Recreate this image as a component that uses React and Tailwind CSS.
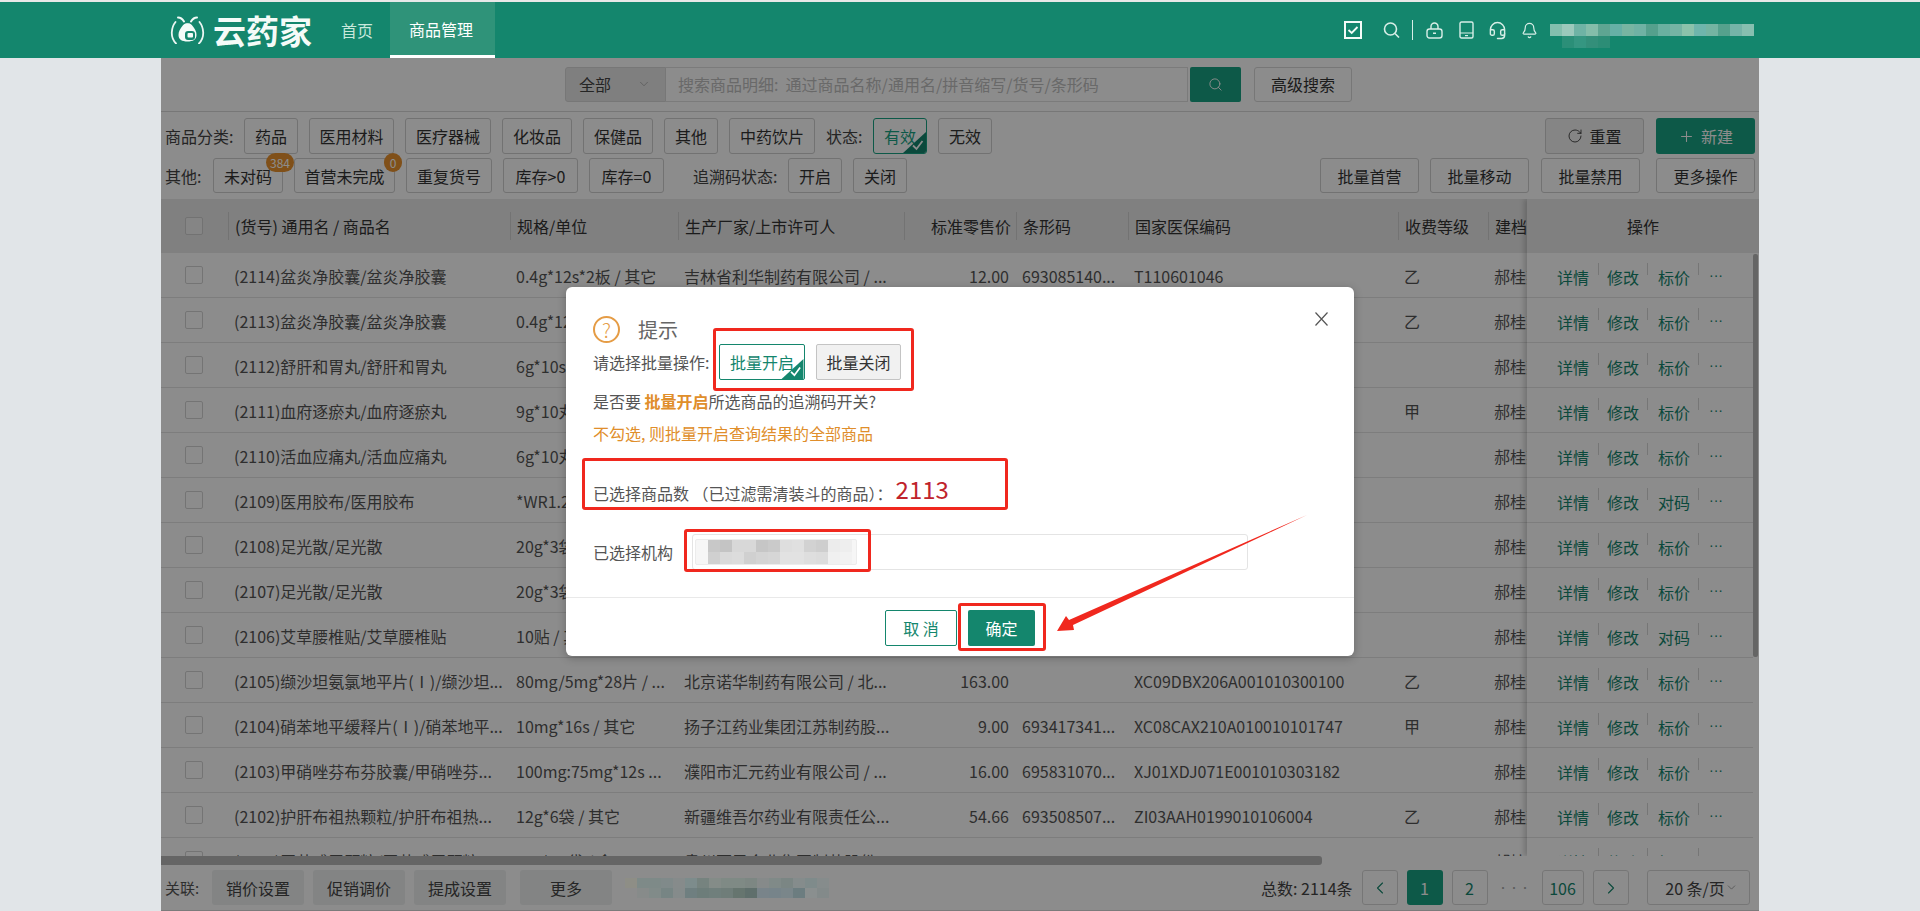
import React from "react";
import { Headset, Bell, ChevronLeft, ChevronRight, ChevronDown, RotateCw, Plus, Search } from "lucide-react";

const COLS = [
  { w: "w-[282px]", pl: "pl-[6px]" },
  { w: "w-[168px]", pl: "pl-[6px]" },
  { w: "w-[226px]", pl: "pl-[6px]" },
  { w: "w-[112px]", pl: "pl-[6px]" },
  { w: "w-[112px]", pl: "pl-[6px]" },
  { w: "w-[270px]", pl: "pl-[6px]" },
  { w: "w-[90px]", pl: "pl-[6px]" },
  { w: "w-[60px]", pl: "pl-[6px]" },
];

const ROWS = [
  ["(2114)盆炎净胶囊/盆炎净胶囊", "0.4g*12s*2板 / 其它", "吉林省利华制药有限公司 / ...", "12.00", "693085140...", "T110601046", "乙", "标价"],
  ["(2113)盆炎净胶囊/盆炎净胶囊", "0.4g*12s*2板 / 其它", "吉林省利华制药有限公司 / ...", "12.00", "693085140...", "T110601046", "乙", "标价"],
  ["(2112)舒肝和胃丸/舒肝和胃丸", "6g*10s / 其它", "", "", "", "", "", "标价"],
  ["(2111)血府逐瘀丸/血府逐瘀丸", "9g*10丸 / 其它", "", "", "", "", "甲", "标价"],
  ["(2110)活血应痛丸/活血应痛丸", "6g*10丸 / 其它", "", "", "", "", "", "标价"],
  ["(2109)医用胶布/医用胶布", "*WR1.2", "", "", "", "", "", "对码"],
  ["(2108)足光散/足光散", "20g*3袋 / 其它", "", "", "", "", "", "标价"],
  ["(2107)足光散/足光散", "20g*3袋 / 其它", "", "", "", "", "", "标价"],
  ["(2106)艾草腰椎贴/艾草腰椎贴", "10贴 / 其它", "", "", "", "", "", "对码"],
  ["(2105)缬沙坦氨氯地平片(Ⅰ)/缬沙坦...", "80mg/5mg*28片 / ...", "北京诺华制药有限公司 / 北...", "163.00", "", "XC09DBX206A001010300100", "乙", "标价"],
  ["(2104)硝苯地平缓释片(Ⅰ)/硝苯地平...", "10mg*16s / 其它", "扬子江药业集团江苏制药股...", "9.00", "693417341...", "XC08CAX210A010010101747", "甲", "标价"],
  ["(2103)甲硝唑芬布芬胶囊/甲硝唑芬...", "100mg:75mg*12s ...", "濮阳市汇元药业有限公司 / ...", "16.00", "695831070...", "XJ01XDJ071E001010303182", "", "标价"],
  ["(2102)护肝布祖热颗粒/护肝布祖热...", "12g*6袋 / 其它", "新疆维吾尔药业有限责任公...", "54.66", "693508507...", "ZI03AAH0199010106004", "乙", "标价"],
  ["(2101)玉苓感冒颗粒/玉苓感冒颗粒", "10g*10袋 / 盒", "贵州百灵企业集团制药股份...", "30.00", "693116399...", "ZA04BAF0758010105535", "", "标价"],
];

function Mosaic({ rows, size = 12, h = 12 }) {
  return (
    <div className="flex flex-col">
      {rows.map((row, i) => (
        <div key={i} className="flex">
          {row.map((c, j) => (
            <div key={j} style={{ width: size, height: h, background: c }} />
          ))}
        </div>
      ))}
    </div>
  );
}

function Corner({ w = 23, h = 21 }) {
  return (
    <svg className="absolute right-0 bottom-0" width={w} height={h} viewBox="0 0 23 21">
      <polygon points="23,0 23,21 0,21" fill="#14866d" />
      <path d="M10 13.5l3.5 3.5 6-8" fill="none" stroke="#fff" strokeWidth="1.8" />
    </svg>
  );
}

function Btn({ w, h = "h-[36px]", children, badge, badgeCls }) {
  return (
    <div className={`relative ${w} ${h} shrink-0 flex items-center justify-center border border-[#cfcfcf] rounded-[3px] text-[#333] whitespace-nowrap`}>
      {children}
      {badge !== undefined && (
        <span className={`absolute top-[-6px] h-[19px] rounded-full bg-[#e9922e] text-white text-[12px] leading-[19px] text-center ${badgeCls}`}>{badge}</span>
      )}
    </div>
  );
}

function Logo() {
  return (
    <svg width="35" height="28" viewBox="0 0 35 28" className="shrink-0">
      <path d="M8 1.500c2.500 0 4.500 1.500 6 4M27 1.500c-2.500 0-4.500 1.500-6 4" fill="none" stroke="#f1faf7" strokeWidth="2" strokeLinecap="round" />
      <path d="M5.500 6C1.500 11-.5 21 6 27.500M29.500 6c4 5 6 15-.5 21.500" fill="none" stroke="#eaf6f2" strokeWidth="1.800" strokeLinecap="round" />
      <path d="M17.500 7c2.500 0 4 1.500 5.500 3.500 2 2.500 3.500 5 3.500 8.500 0 4.500-3.500 6.500-9 6.500s-9-2-9-6.500c0-3.500 1.500-6 3.500-8.500 1.500-2 3-3.500 6-3.500z" fill="#f4fbf8" />
      <rect x="15" y="15" width="10" height="9" rx="3" fill="#14866d" />
      <rect x="17.500" y="17" width="5.500" height="4.500" rx="1" fill="#f4fbf8" />
    </svg>
  );
}

const ICON = "#d8eee7";

function HeaderIcons() {
  return (
    <div className="flex items-center ml-auto">
      <svg width="18" height="18" viewBox="0 0 18 18">
        <rect x="1" y="1" width="16" height="16" fill="none" stroke="#f4fbf8" strokeWidth="2" />
        <path d="M4.500 9l3.200 3 5.800-6" fill="none" stroke="#f4fbf8" strokeWidth="1.800" />
      </svg>
      <svg width="17" height="16" viewBox="0 0 17 16" className="ml-[21px]">
        <circle cx="7.500" cy="7" r="6" fill="none" stroke={ICON} strokeWidth="1.600" />
        <path d="M12 11.500l4 4" stroke={ICON} strokeWidth="1.600" />
      </svg>
      <div className="ml-[12px] w-[1px] h-[20px] bg-[#d8eee7]" />
      <svg width="17" height="17" viewBox="0 0 17 17" className="ml-[13px]">
        <path d="M5 7V4.500a3.500 3.500 0 0 1 7 0V7" fill="none" stroke={ICON} strokeWidth="1.400" />
        <rect x="1" y="7" width="15" height="9" rx="2.500" fill="none" stroke={ICON} strokeWidth="1.400" />
        <rect x="7" y="10.500" width="3" height="1.500" fill={ICON} />
      </svg>
      <svg width="15" height="18" viewBox="0 0 15 18" className="ml-[16px]">
        <rect x="1" y="1" width="13" height="16" rx="1.500" fill="none" stroke={ICON} strokeWidth="1.400" />
        <path d="M1 12h13" stroke={ICON} strokeWidth="1" />
        <rect x="6" y="14" width="3" height="1.200" fill={ICON} />
      </svg>
      <Headset size={19} strokeWidth={1.800} color={ICON} className="ml-[14px]" />
      <Bell size={17} strokeWidth={1.700} color={ICON} className="ml-[14px]" />
      <div className="ml-[12px] mt-[12px] w-[204px]">
        <Mosaic
          size={12}
          rows={[
            ["#84bfae", "#9cc9bc", "#6fb3a5", "#84bdaa", "#5fa592", "#66b0a6", "#78b5a2", "#70b2a4", "#55a08d", "#6ab0a0", "#75b4a4", "#8cc2ab", "#6fb5ac", "#74b4a2", "#55a18d", "#75b4a8", "#87bfb0"],
            ["#14866d", "#2b8f78", "#359681", "#338f7a", "#2c8d76", "#14866d", "#14866d", "#14866d", "#14866d", "#14866d", "#14866d", "#14866d", "#14866d", "#14866d", "#14866d", "#14866d", "#14866d"],
          ]}
        />
      </div>
    </div>
  );
}

function TableHead() {
  const names = ["(货号) 通用名 / 商品名", "规格/单位", "生产厂家/上市许可人", "标准零售价", "条形码", "国家医保编码", "收费等级", "建档"];
  return (
    <div className="flex h-[54px] bg-[#e9e9e9] items-center text-[#333] whitespace-nowrap">
      <div className="w-[67px] shrink-0 flex pl-[24px]">
        <div className="w-[18px] h-[18px] border border-[#cfcfcf] rounded-[2px] bg-[#f2f2f2]" />
      </div>
      {names.map((n, i) => (
        <div key={n} className={`relative shrink-0 h-[28px] flex items-center border-l border-[#d2d2d2] ${COLS[i].w} ${i === 3 ? "justify-end pr-[5px]" : COLS[i].pl}`}>
          {n}
        </div>
      ))}
    </div>
  );
}

function Row({ r }) {
  return (
    <div className="flex h-[45px] border-b border-[#e4e4e4] items-center text-[#555] whitespace-nowrap">
      <div className="w-[67px] shrink-0 flex pl-[24px]">
        <div className="w-[18px] h-[18px] border border-[#d4d4d4] rounded-[2px]" />
      </div>
      {COLS.slice(0, 7).map((c, i) => (
        <div key={i} className={`shrink-0 overflow-hidden pt-[2px] ${c.w} ${i === 3 ? "text-right pr-[7px]" : c.pl}`}>
          {r[i] || "\u00a0"}
        </div>
      ))}
      <div className={`shrink-0 pt-[2px] ${COLS[7].w} ${COLS[7].pl}`}>郝桂英</div>
    </div>
  );
}

function OpsRow({ third }) {
  const sep = <span className="w-[1px] h-[12px] bg-[#d8d8d8] mt-[-12px]" />;
  return (
    <div className="flex h-[45px] border-b border-[#e4e4e4] items-center pl-[30px] text-[#14866d] whitespace-nowrap">
      <span className="pt-[3px] w-[41px]">详情</span>
      {sep}
      <span className="pt-[3px] w-[40px] ml-[8px]">修改</span>
      {sep}
      <span className="pt-[3px] w-[40px] ml-[10px]">{third}</span>
      {sep}
      <span className="ml-[10px] text-[14px] font-['Liberation_Sans',sans-serif]">···</span>
    </div>
  );
}

function Filters() {
  return (
    <div className="flex justify-between pt-[6px] pb-[6px] pr-[4px] pl-[4px]">
      <div className="flex flex-col gap-[4px]">
        <div className="flex items-center gap-[11px]">
          <span className="w-[68px] whitespace-nowrap text-[#444]">商品分类:</span>
          <Btn w="w-[54px]">药品</Btn>
          <Btn w="w-[85px]">医用材料</Btn>
          <Btn w="w-[86px]">医疗器械</Btn>
          <Btn w="w-[70px]">化妆品</Btn>
          <Btn w="w-[70px]">保健品</Btn>
          <Btn w="w-[54px]">其他</Btn>
          <Btn w="w-[86px]">中药饮片</Btn>
          <span className="w-[36px] whitespace-nowrap text-[#444]">状态:</span>
          <div className="relative w-[54px] h-[36px] shrink-0 flex items-center justify-center border border-[#19a384] rounded-[3px] text-[#19a384] overflow-hidden">
            有效
            <Corner />
          </div>
          <Btn w="w-[54px]">无效</Btn>
        </div>
        <div className="flex items-center gap-[11px]">
          <span className="w-[37px] whitespace-nowrap text-[#444]">其他:</span>
          <Btn w="w-[70px]" h="h-[35px]" badge="384" badgeCls="right-[-12px] w-[28px]">未对码</Btn>
          <Btn w="w-[101px]" h="h-[35px]" badge="0" badgeCls="right-[-8px] w-[18px]">首营未完成</Btn>
          <Btn w="w-[86px]" h="h-[35px]">重复货号</Btn>
          <Btn w="w-[75px]" h="h-[35px]">库存&gt;0</Btn>
          <Btn w="w-[75px]" h="h-[35px]">库存=0</Btn>
          <span className="ml-[18px] w-[84px] whitespace-nowrap text-[#444]">追溯码状态:</span>
          <Btn w="w-[54px]" h="h-[35px]">开启</Btn>
          <Btn w="w-[54px]" h="h-[35px]">关闭</Btn>
        </div>
      </div>
      <div className="flex flex-col gap-[4px] items-end">
        <div className="flex gap-[12px]">
          <div className="w-[99px] h-[36px] flex items-center justify-center gap-[6px] border border-[#cfcfcf] rounded-[3px] bg-[#f2f2f2] text-[#333]">
            <RotateCw size={16} strokeWidth={1.300} />
            重置
          </div>
          <div className="w-[99px] h-[36px] flex items-center justify-center gap-[6px] rounded-[3px] bg-[#19a384] text-white">
            <Plus size={17} strokeWidth={1.500} />
            新建
          </div>
        </div>
        <div className="flex">
          <Btn w="w-[99px]" h="h-[35px]">批量首营</Btn>
          <div className="w-[11px]" />
          <Btn w="w-[99px]" h="h-[35px]">批量移动</Btn>
          <div className="w-[12px]" />
          <Btn w="w-[99px]" h="h-[35px]">批量禁用</Btn>
          <div className="w-[16px]" />
          <Btn w="w-[99px]" h="h-[35px]">更多操作</Btn>
        </div>
      </div>
    </div>
  );
}

function Footer() {
  const pg = "h-[35px] flex items-center justify-center border border-[#d8d8d8] rounded-[3px]";
  const tool = "w-[92px] h-[35px] flex items-center justify-center rounded-[3px] bg-[#eef1f1] text-[#444]";
  return (
    <div className="h-[46px] flex items-start pt-[5px] pl-[4px] whitespace-nowrap border-b border-[#e0e0e0]">
      <span className="w-[47px] h-[35px] flex items-center text-[#555] text-[15px]">关联:</span>
      <div className={tool}>销价设置</div>
      <div className={`${tool} ml-[9px]`}>促销调价</div>
      <div className={`${tool} ml-[9px]`}>提成设置</div>
      <div className={`${tool} ml-[14px]`}>更多</div>
      <div className="relative z-20 ml-[13px] mt-[8px]">
        <Mosaic
          size={12}
          h={10}
          rows={[
            ["#8e8e86", "#7e8a88", "#7e8a88", "#808a8a", "#868b8b", "#7d8c8c", "#76837f", "#848c88", "#7f8a85", "#7f8a85", "#7d8783", "#868a8a", "#808a88", "#7b8684", "#858c8c", "#7f8b8b", "#868c8c"],
            ["#8c8c8c", "#878b8a", "#818b89", "#778584", "#858b8b", "#6f7f80", "#6d7d7a", "#707f7c", "#6f7d79", "#66756f", "#5f6f6c", "#79848a", "#77848a", "#7a868a", "#6c7d80", "#8a8f8f", "#838a8a"],
          ]}
        />
      </div>
      <span className="ml-[432px] h-[35px] flex items-center text-[#444]">总数: 2114条</span>
      <div className={`${pg} w-[36px] ml-[9px] text-[#14866d]`}><ChevronLeft size={20} strokeWidth={1.300} /></div>
      <div className="w-[36px] h-[35px] ml-[9px] flex items-center justify-center rounded-[3px] bg-[#19a384] text-white">1</div>
      <div className={`${pg} w-[36px] ml-[9px] text-[#14866d]`}>2</div>
      <div className="w-[54px] h-[35px] flex items-center justify-center text-[#aaa] text-[10px] tracking-[1px]">•••</div>
      <div className={`${pg} w-[42px] text-[#14866d]`}>106</div>
      <div className={`${pg} w-[36px] ml-[9px] text-[#14866d]`}><ChevronRight size={20} strokeWidth={1.300} /></div>
      <div className={`${pg} w-[103px] ml-[18px] justify-between pl-[13px] pr-[6px] text-[#444]`}>
        20 条/页
        <ChevronDown size={13} strokeWidth={1.200} color="#777" className="shrink-0" />
      </div>
    </div>
  );
}

function Modal() {
  return (
    <div className="absolute z-30 left-[566px] top-[287px] w-[788px] h-[369px] bg-white rounded-[6px] flex flex-col pl-[27px] pt-[29px] text-[#555] shadow-[0_2px_8px_rgba(0,0,0,0.25)]">
      <svg className="absolute top-[25px] right-[26px]" width="13" height="14" viewBox="0 0 13 14">
        <path d="M.5.5l12 13M12.500.5l-12 13" stroke="#555" strokeWidth="1.200" fill="none" />
      </svg>
      <div className="flex items-center h-[27px]">
        <div className="w-[27px] h-[27px] rounded-full border-2 border-[#e59c45] flex items-center justify-center text-[#e59c45] text-[20px] leading-none font-light">?</div>
        <span className="ml-[18px] text-[20px] text-[#666]">提示</span>
      </div>
      <div className="flex items-center h-[36px] mt-[1px]">
        <span className="w-[126px] whitespace-nowrap">请选择批量操作:</span>
        <div className="relative w-[86px] h-[36px] flex items-center justify-center border border-[#14866d] rounded-[2px] text-[#14866d] overflow-hidden">
          批量开启
          <Corner w={23} h={20} />
        </div>
        <div className="ml-[11px] w-[85px] h-[36px] flex items-center justify-center border border-[#c4c4c4] rounded-[2px] bg-[#f1f1f1] text-[#333]">批量关闭</div>
      </div>
      <div className="mt-[9px] h-[24px] flex items-center whitespace-nowrap">
        是否要&nbsp;<b className="text-[#e08e2b] font-bold">批量开启</b>所选商品的追溯码开关?
      </div>
      <div className="mt-[8px] h-[24px] flex items-center whitespace-nowrap text-[#e08e2b]">不勾选, 则批量开启查询结果的全部商品</div>
      <div className="mt-[26px] h-[36px] flex items-center whitespace-nowrap">
        <span className="pt-[8px]">已选择商品数 （已过滤需清装斗的商品）：</span>
        <span className="ml-[3px] text-[24px] leading-[36px] text-[#c0232c]">2113</span>
      </div>
      <div className="mt-[27px] h-[36px] flex items-center">
        <span className="w-[99px] whitespace-nowrap">已选择机构</span>
        <div className="w-[556px] h-[36px] border border-[#e4e4e4] rounded-[3px] pl-[2px] pt-[4px]">
          <div className="w-[162px] h-[26px] border border-[#ececec] rounded-[2px] bg-[#f6f6f6] pl-[12px] overflow-hidden">
            <Mosaic
              size={12}
              h={12}
              rows={[
                ["#c8c8c8", "#c4c4c4", "#d8d8d8", "#d8d8d8", "#c6c6c6", "#cacaca", "#dedede", "#e0e0e0", "#d2d2d2", "#cecece", "#ececec", "#eeeeee"],
                ["#d0d0d0", "#dadada", "#dcdcdc", "#d0d0d0", "#d4d4d4", "#d6d6d6", "#e2e2e2", "#e2e2e2", "#dedede", "#dcdcdc", "#f0f0f0", "#f2f2f2"],
              ]}
            />
          </div>
        </div>
      </div>
      <div className="mt-[27px] ml-[-27px] border-t border-[#e9e9e9] w-[788px]" />
      <div className="flex mt-[12px] ml-[292px]">
        <div className="w-[72px] h-[36px] flex items-center justify-center border border-[#14866d] rounded-[2px] text-[#14866d] whitespace-pre">取 消</div>
        <div className="ml-[11px] w-[67px] h-[36px] flex items-center justify-center rounded-[2px] bg-[#14866d] text-white">确定</div>
      </div>
    </div>
  );
}

function Marks() {
  const box = "absolute z-40 border-[3px] border-[#f0281e] rounded-[3px]";
  return (
    <>
      <div className={`${box} left-[713px] top-[328px] w-[201px] h-[63px]`} />
      <div className={`${box} left-[582px] top-[458px] w-[426px] h-[52px]`} />
      <div className={`${box} left-[684px] top-[529px] w-[187px] h-[43px]`} />
      <div className={`${box} left-[958px] top-[603px] w-[88px] h-[48px]`} />
      <svg className="absolute z-40 left-[1050px] top-[510px]" width="262" height="126" viewBox="1050 510 262 126">
        <polygon points="1057,631 1066,616 1069,620 1307,515 1073,625 1074,630" fill="#f0281e" />
      </svg>
    </>
  );
}

export default function App() {
  return (
    <div className="relative w-[1920px] h-[911px] overflow-hidden bg-[#e1e5e8] flex flex-col text-[16px] leading-[24px] font-['Noto_Sans_CJK_SC','Noto_Sans',sans-serif]">
      <div className="h-[2px] bg-[#e8e8e8] shrink-0" />
      <header className="h-[56px] shrink-0 bg-[#14866d] flex items-center pl-[170px] pr-[166px]">
        <Logo />
        <span className="ml-[8px] w-[99px] text-[33px] leading-[40px] font-bold text-[#f4fbf8] whitespace-nowrap">云药家</span>
        <span className="ml-[29px] text-[#c8e8dc]">首页</span>
        <div className="ml-[17px] w-[105px] h-[56px] bg-[#2f9379] border-b-[3px] border-white flex items-center pl-[19px] text-white">商品管理</div>
        <HeaderIcons />
      </header>
      <main className="relative ml-[161px] w-[1598px] flex-1 bg-white flex flex-col overflow-hidden">
        <div className="h-[54px] shrink-0 border-b border-[#d9d9d9] flex items-center pl-[404px] pb-[1px]">
          <div className="w-[101px] h-[35px] flex items-center justify-between pl-[13px] pr-[14px] border border-[#d9d9d9] rounded-l-[3px] bg-[#e8e8e8] text-[#444]">
            全部
            <ChevronDown size={14} strokeWidth={1.200} color="#999" />
          </div>
          <div className="w-[522px] h-[35px] flex items-center pl-[12px] border-y border-r border-[#e0e0e0] text-[#c0c0c0] whitespace-pre overflow-hidden">搜索商品明细:  通过商品名称/通用名/拼音缩写/货号/条形码</div>
          <div className="ml-[2px] w-[51px] h-[35px] flex items-center justify-center rounded-[2px] bg-[#19a384] text-white">
            <Search size={15} strokeWidth={1.500} />
          </div>
          <div className="ml-[13px] w-[98px] h-[35px] flex items-center justify-center border border-[#d9d9d9] rounded-[3px] text-[#333]">高级搜索</div>
        </div>
        <Filters />
        <div className="relative h-[666px] flex flex-col shrink-0 overflow-hidden">
          <div className="flex h-[657px] overflow-hidden shrink-0">
            <div className="w-[1366px] shrink-0 overflow-hidden">
              <TableHead />
              {ROWS.map((r) => (
                <Row key={r[0]} r={r} />
              ))}
            </div>
            <div className="w-[232px] shrink-0 pr-[6px] bg-white shadow-[-3px_0_5px_rgba(0,0,0,0.18)]">
              <div className="h-[54px] mr-[-6px] bg-[#e9e9e9] flex items-center justify-center text-[#333]">操作</div>
              {ROWS.map((r) => (
                <OpsRow key={r[0]} third={r[7]} />
              ))}
            </div>
          </div>
          <div className="h-[9px] bg-[#fff] shrink-0">
            <div className="w-[1161px] h-[9px] rounded-r-[3px] bg-[#b9b9b9]" />
          </div>
          <div className="absolute right-[1px] top-[55px] w-[5px] h-[403px] rounded-[2px] bg-[#b9b9b9]" />
        </div>
        <Footer />
        <div className="absolute inset-0 z-10 bg-black/45" />
      </main>
      <Modal />
      <Marks />
    </div>
  );
}
